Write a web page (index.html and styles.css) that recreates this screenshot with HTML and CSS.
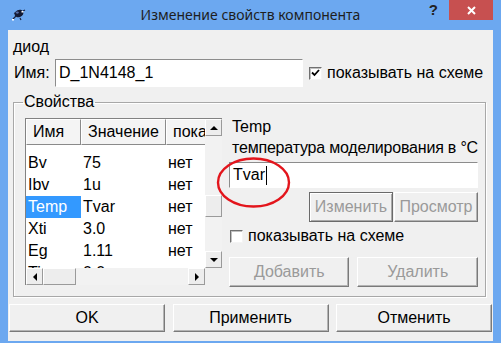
FILE: index.html
```html
<!DOCTYPE html>
<html>
	<head>
		<meta charset="utf-8">
		<title>Изменение свойств компонента</title>
		<link rel="stylesheet" href="styles.css">
	</head>
	<body>
		<div class="window">
			<div class="titlebar">
				<div class="title-left">
					<svg class="app-icon" width="15" height="14" viewBox="0 0 15 14">
						<path d="M2 12 L5 9 M3 6 L6 7 M9 11 L10 13 M12 4 L14 3" stroke="#1c2440" stroke-width="1.2"/>
						<ellipse cx="8" cy="6.5" rx="4.6" ry="3.6" transform="rotate(-25 8 6.5)" fill="#141a33"/>
						<ellipse cx="6.3" cy="5.6" rx="1.6" ry="1.1" fill="#5b6fa8"/>
						<rect x="10.5" y="4" width="2" height="1.5" fill="#fff"/>
						<rect x="1" y="12" width="2" height="1.5" fill="#fff"/>
					</svg>
				</div>
				<div class="title">Изменение свойств компонента</div>
				<div class="caption-buttons">
					<div class="help">?</div>
					<div class="close">
						<svg width="9" height="9" viewBox="0 0 9 9">
							<path d="M1 1 L8 8 M8 1 L1 8" stroke="#fff" stroke-width="2"/>
						</svg>
					</div>
				</div>
			</div>
			<div class="client">
				<div class="kind">диод</div>
				<div class="name-row">
					<span class="name-label">Имя:</span>
					<div class="edit name-edit">D_1N4148_1</div>
					<span class="check">
						<svg width="9" height="8" viewBox="0 0 9 8">
							<path d="M1 3.5 L3.5 6 L8 1" stroke="#000" stroke-width="1.8" fill="none"/>
						</svg>
					</span>
					<span class="check-label">показывать на схеме</span>
				</div>
				<fieldset class="group">
					<legend>Свойства</legend>
					<div class="list">
						<div class="list-top">
							<div class="list-view">
								<div class="list-head">
									<div class="head-cell">Имя</div>
									<div class="head-cell">Значение</div>
									<div class="head-cell">показывать</div>
								</div>
								<div class="list-body">
									<div class="row"><span>Bv</span><span>75</span><span>нет</span></div>
									<div class="row"><span>Ibv</span><span>1u</span><span>нет</span></div>
									<div class="row selected"><span>Temp</span><span>Tvar</span><span>нет</span></div>
									<div class="row"><span>Xti</span><span>3.0</span><span>нет</span></div>
									<div class="row"><span>Eg</span><span>1.11</span><span>нет</span></div>
									<div class="row"><span>Ti</span><span>0.0</span><span>нет</span></div>
								</div>
							</div>
							<div class="vscroll">
								<div class="sb-btn"><i class="arrow up"></i></div>
								<div class="sb-track-v">
									<div class="sb-thumb-v"></div>
								</div>
								<div class="sb-btn"><i class="arrow down"></i></div>
							</div>
						</div>
						<div class="hscroll">
							<div class="sb-btn"><i class="arrow left"></i></div>
							<div class="sb-thumb-h"></div>
							<div class="sb-track-h"></div>
							<div class="sb-btn"><i class="arrow right"></i></div>
							<div class="sb-corner"></div>
						</div>
					</div>
					<div class="details">
						<div class="param-name">Temp</div>
						<div class="param-desc">температура моделирования в °C</div>
						<div class="edit value-edit">Tvar<span class="caret"></span></div>
						<svg class="mark" width="78" height="54" viewBox="0 0 78 54">
							<ellipse cx="38.5" cy="26.5" rx="35.5" ry="24" fill="none" stroke="#e3151c" stroke-width="2.4"/>
						</svg>
						<div class="edit-buttons">
							<div class="btn focused disabled">Изменить</div>
							<div class="btn disabled">Просмотр</div>
						</div>
						<div class="show-row">
							<span class="check"></span>
							<span class="check-label">показывать на схеме</span>
						</div>
						<div class="add-buttons">
							<div class="btn disabled">Добавить</div>
							<div class="btn disabled">Удалить</div>
						</div>
					</div>
				</fieldset>
				<div class="dialog-buttons">
					<div class="btn">OK</div>
					<div class="btn">Применить</div>
					<div class="btn">Отменить</div>
				</div>
			</div>
		</div>
	</body>
</html>
```

FILE: styles.css
```css
* {
	box-sizing: border-box;
}
html, body {
	margin: 0;
	width: 501px;
	height: 343px;
	overflow: hidden;
}
body {
	font-family: "Liberation Sans", Arial, sans-serif;
	font-size: 16px;
	line-height: 18px;
	color: #000;
}
.window {
	width: 501px;
	height: 343px;
	background-color: #6ca8f0;
	display: flex;
	flex-direction: column;
}
.titlebar {
	height: 30px;
	flex: none;
	display: grid;
	grid-template-columns: 1fr auto 1fr;
}
.app-icon {
	display: block;
	margin: 7px 0 0 11px;
}
.title {
	font-family: "Noto Sans", sans-serif;
	font-size: 14px;
	line-height: 29px;
	color: #1e1e1e;
}
.caption-buttons {
	display: flex;
	justify-content: flex-end;
	align-items: flex-start;
	padding-right: 8px;
}
.help {
	font-weight: bold;
	font-size: 15px;
	line-height: 20px;
	color: #222;
	margin-right: 11px;
}
.close {
	width: 44px;
	height: 20px;
	background-color: #c75050;
	display: flex;
	align-items: center;
	justify-content: center;
}
.client {
	flex: 1;
	margin: 0 8px 2px;
	background-color: #f0f0f0;
	display: flex;
	flex-direction: column;
}
.kind {
	margin: 8px 0 0 5px;
}
.name-row {
	display: flex;
	align-items: center;
	height: 28px;
	margin-top: 3px;
	padding-left: 6px;
}
.name-label {
	width: 41px;
}
.edit {
	background-color: #fff;
	border: solid 1px;
	border-color: #8c8c8c #fff #fff #8c8c8c;
	padding-left: 3px;
	display: flex;
	align-items: center;
}
.name-edit {
	width: 248px;
	height: 28px;
}
.check {
	width: 13px;
	height: 13px;
	background-color: #fff;
	border: solid 1px;
	border-color: #707070 #f4f4f4 #f4f4f4 #707070;
	box-shadow: inset 1px 1px 0 #c0c0c0;
	display: flex;
	align-items: center;
	justify-content: center;
}
.name-row .check {
	margin-left: 6px;
}
.check-label {
	margin-left: 5px;
}
.group {
	margin: 6px 7px 0 5px;
	padding: 7px 8px 11px 11px;
	height: 204px;
	border: solid 1px #a8a8a8;
	box-shadow: 1px 1px 0 #fff, inset 1px 1px 0 #fff;
	display: flex;
	gap: 7px;
	min-width: 0;
}
.group legend {
	margin-left: -2px;
	padding: 0 1px;
}
.list {
	width: 197px;
	height: 167px;
	flex: none;
	border-top: solid 1px #828282;
	border-left: solid 1px #828282;
	display: flex;
	flex-direction: column;
}
.list-top {
	flex: 1;
	display: flex;
	min-height: 0;
}
.list-view {
	flex: 1;
	overflow: hidden;
	background-color: #fff;
	display: flex;
	flex-direction: column;
}
.list-head, .row {
	display: grid;
	grid-template-columns: 55px 85px 80px;
	white-space: nowrap;
}
.list-head {
	height: 26px;
	flex: none;
}
.head-cell {
	background-color: #f4f4f4;
	border: solid 1px;
	border-color: #fff #8a8a8a #8a8a8a #fff;
	padding-left: 6px;
	line-height: 24px;
	overflow: hidden;
}
.list-body {
	flex: 1;
	overflow: hidden;
	padding-top: 7px;
}
.row {
	height: 22px;
	line-height: 22px;
}
.row span {
	padding-left: 2px;
}
.row.selected span:first-child {
	background-color: #3399ff;
	color: #fff;
}
.vscroll {
	width: 17px;
	flex: none;
	display: flex;
	flex-direction: column;
	background-color: #f2f2f2;
}
.sb-btn, .sb-thumb-v, .sb-thumb-h {
	width: 17px;
	height: 17px;
	flex: none;
	background-color: #ededed;
	border: solid 1px;
	border-color: #fff #9a9a9a #9a9a9a #fff;
	display: flex;
	align-items: center;
	justify-content: center;
}
.sb-track-v {
	flex: 1;
}
.sb-thumb-v {
	height: 22px;
	margin-top: 59px;
}
.hscroll {
	height: 17px;
	flex: none;
	display: flex;
	background-color: #f2f2f2;
}
.sb-thumb-h {
	width: 33px;
}
.sb-track-h {
	flex: 1;
}
.sb-corner {
	width: 17px;
	background-color: #f0f0f0;
}
.arrow {
	width: 0;
	height: 0;
	border: solid 4px transparent;
}
.arrow.up {
	border-bottom-color: #000;
	border-top-width: 0;
}
.arrow.down {
	border-top-color: #000;
	border-bottom-width: 0;
}
.arrow.left {
	border-right-color: #000;
	border-left-width: 0;
}
.arrow.right {
	border-left-color: #000;
	border-right-width: 0;
}
.details {
	flex: 1;
	display: flex;
	flex-direction: column;
	position: relative;
	white-space: nowrap;
}
.param-name, .param-desc {
	padding-left: 3px;
}
.param-desc {
	margin-top: 3px;
	letter-spacing: -0.2px;
}
.value-edit {
	height: 26px;
	margin-top: 5px;
}
.caret {
	width: 1px;
	height: 19px;
	margin-left: 1px;
	background-color: #000;
}
.mark {
	position: absolute;
	left: -14px;
	top: 38px;
}
.btn {
	height: 30px;
	background-color: #f0f0f0;
	border: solid 1px;
	border-color: #fff #7a7a7a #7a7a7a #fff;
	box-shadow: inset -1px -1px 0 #b4b4b4;
	display: flex;
	align-items: center;
	justify-content: center;
}
.btn.disabled {
	color: #9a9a9a;
}
.btn.focused {
	border-color: #6a6a6a;
	box-shadow: inset 1px 1px 0 #fff, inset -1px -1px 0 #a8a8a8;
}
.edit-buttons {
	display: flex;
	justify-content: flex-end;
	gap: 1px;
	margin-top: 4px;
}
.edit-buttons .btn {
	width: 84px;
}
.show-row {
	display: flex;
	align-items: center;
	height: 18px;
	margin-top: 5px;
	padding-left: 1px;
}
.add-buttons {
	display: flex;
	gap: 8px;
	margin-top: 12px;
}
.add-buttons .btn {
	flex: 1;
}
.dialog-buttons {
	display: flex;
	justify-content: space-between;
	padding: 0 1px;
	margin-top: 7px;
}
.dialog-buttons .btn {
	width: 156px;
	height: 28px;
}
```
